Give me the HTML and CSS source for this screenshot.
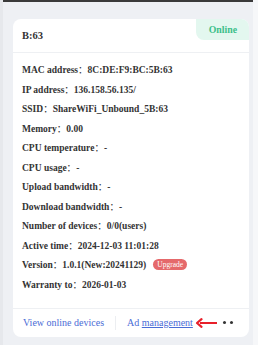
FILE: index.html
```html
<!DOCTYPE html>
<html lang="en">

<head>
    <meta charset="UTF-8">
    <meta name="viewport" content="width=device-width, initial-scale=1.0">
    <title>Device B:63</title>
    <link rel="stylesheet" href="styles.css">
</head>

<body>
    <div class="topbar"></div>
    <div class="card">
        <div class="cardHead">
            <span class="devName">B:63</span>
            <span class="status">Online</span>
        </div>

        <div class="cardBody">
            <div class="row">MAC address<i>：</i>8C:DE:F9:BC:5B:63</div>
            <div class="row">IP address<i>：</i>136.158.56.135/</div>
            <div class="row">SSID<i>：</i>ShareWiFi_Unbound_5B:63</div>
            <div class="row">Memory<i>：</i>0.00</div>
            <div class="row">CPU temperature<i>：</i>-</div>
            <div class="row">CPU usage<i>：</i>-</div>
            <div class="row">Upload bandwidth<i>：</i>-</div>
            <div class="row">Download bandwidth<i>：</i>-</div>
            <div class="row">Number of devices<i>：</i>0/0(users)</div>
            <div class="row">Active time<i>：</i>2024-12-03 11:01:28</div>
            <div class="row">Version<i>：</i>1.0.1(New:20241129)<span class="upgrade">Upgrade</span></div>
            <div class="row">Warranty to<i>：</i>2026-01-03</div>
        </div>

        <div class="cardFoot">
            <a class="link">View online devices</a>
            <span class="sep"></span>
            <a class="link">Ad <u>management</u></a>
            <svg class="arrow" width="24" height="10" viewBox="0 0 24 10">
                <path d="M5 5 H22" stroke="#e8202a" stroke-width="2.2" />
                <path d="M6.5 1.2 L2 5 L6.5 8.8" fill="none" stroke="#e8202a" stroke-width="2.2" stroke-linejoin="round" stroke-linecap="round" />
            </svg>
            <span class="dot"></span>
            <span class="dot"></span>
        </div>
    </div>
</body>

</html>
```

FILE: styles.css
```css
body {
    margin: 0;
    background: #eef0f4;
    font-family: "Liberation Serif", "Times New Roman", serif;
    color: #333;
    height: 345px;
    overflow: hidden;
    border-left: 3px solid #e6e8ec;
    border-right: 5px solid #f6f7f9;
}

.topbar {
    height: 2px;
    margin-left: -3px;
    margin-right: -5px;
    background: #3a3a3a;
}

.card {
    margin: 17px 4px 0 10px;
    background: #fff;
    border-radius: 8px;
    overflow: hidden;
}

.cardHead {
    display: flex;
    justify-content: space-between;
    align-items: flex-start;
    height: 33px;
    border-bottom: 1px solid #eef0f3;
}

.devName {
    font-weight: bold;
    font-size: 10.5px;
    padding: 11px 0 0 9px;
}

.status {
    background: #e3f7ef;
    color: #3cbf8a;
    font-weight: bold;
    font-size: 9.8px;
    line-height: 13px;
    padding: 4px 12px 4px 13px;
    border-bottom-left-radius: 8px;
}

.cardBody {
    padding: 8px 9px 13px 9px;
    border-bottom: 1px solid #eef0f3;
}

.row {
    height: 19.5px;
    font-size: 9.5px;
    font-weight: bold;
    line-height: 19.5px;
    white-space: nowrap;
}

.row i {
    font-style: normal;
    font-family: "Noto Sans CJK SC", sans-serif;
    font-weight: normal;
    line-height: 1;
}

.upgrade {
    display: inline-block;
    background: #e5696b;
    color: #fff;
    font-size: 7.5px;
    font-weight: normal;
    line-height: 11px;
    padding: 0 4px;
    border-radius: 6px;
    margin-left: 7px;
    vertical-align: 1px;
}

.cardFoot {
    display: flex;
    align-items: center;
    height: 27px;
    padding: 0 10px 1px 10px;
}

.link {
    color: #4a6cd6;
    font-size: 10px;
    white-space: nowrap;
}

.link u {
    text-decoration: underline;
}

.sep {
    width: 1px;
    height: 14px;
    background: #eceef1;
    margin: 0 11px;
}

.arrow {
    margin-left: 2px;
}

.dot {
    width: 3px;
    height: 3px;
    border-radius: 50%;
    background: #333;
    margin-left: 4px;
}
```
